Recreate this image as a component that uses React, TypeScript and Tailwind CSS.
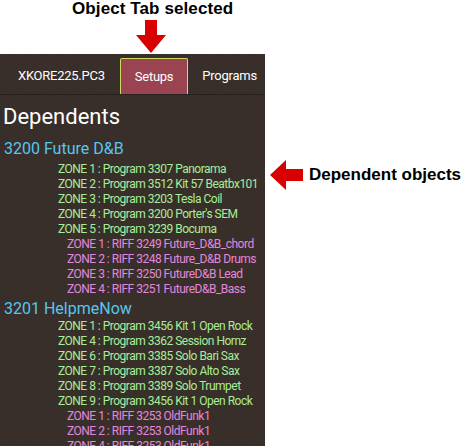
import React from "react";

type Line = { text: string; kind: "zone" | "riff" };

const groups: { title: string; lines: Line[] }[] = [
  {
    title: "3200 Future D&B",
    lines: [
      { text: "ZONE 1 : Program 3307 Panorama", kind: "zone" },
      { text: "ZONE 2 : Program 3512 Kit 57 Beatbx101", kind: "zone" },
      { text: "ZONE 3 : Program 3203 Tesla Coil", kind: "zone" },
      { text: "ZONE 4 : Program 3200 Porter's SEM", kind: "zone" },
      { text: "ZONE 5 : Program 3239 Bocuma", kind: "zone" },
      { text: "ZONE 1 : RIFF 3249 Future_D&B_chord", kind: "riff" },
      { text: "ZONE 2 : RIFF 3248 Future_D&B Drums", kind: "riff" },
      { text: "ZONE 3 : RIFF 3250 FutureD&B Lead", kind: "riff" },
      { text: "ZONE 4 : RIFF 3251 FutureD&B_Bass", kind: "riff" },
    ],
  },
  {
    title: "3201 HelpmeNow",
    lines: [
      { text: "ZONE 1 : Program 3456 Kit 1 Open Rock", kind: "zone" },
      { text: "ZONE 4 : Program 3362 Session Hornz", kind: "zone" },
      { text: "ZONE 6 : Program 3385 Solo Bari Sax", kind: "zone" },
      { text: "ZONE 7 : Program 3387 Solo Alto Sax", kind: "zone" },
      { text: "ZONE 8 : Program 3389 Solo Trumpet", kind: "zone" },
      { text: "ZONE 9 : Program 3456 Kit 1 Open Rock", kind: "zone" },
      { text: "ZONE 1 : RIFF 3253 OldFunk1", kind: "riff" },
      { text: "ZONE 2 : RIFF 3253 OldFunk1", kind: "riff" },
      { text: "ZONE 4 : RIFF 3253 OldFunk1", kind: "riff" },
    ],
  },
];

export default function App() {
  return (
    <div className="w-[462px] h-[446px] bg-white overflow-hidden font-['Roboto',sans-serif]">
      <div className="h-[54px] flex flex-col">
        <div className="ml-[72px] text-[17px] leading-[17px] font-bold text-black font-['Liberation_Sans',Arial,sans-serif] tracking-[0.1px]">
          Object Tab selected
        </div>
        <svg className="ml-[136px] mt-[3px]" width="30" height="33" viewBox="0 0 30 33">
          <polygon points="9,0 21,0 21,15 30,15 15,33 0,15 9,15" fill="#d80000" />
        </svg>
      </div>
      <div className="flex">
        <div className="w-[265px] h-[392px] bg-[#3a302b] bg-[repeating-linear-gradient(45deg,rgba(0,0,0,0.07)_0px,rgba(0,0,0,0.07)_1px,transparent_1px,transparent_3px)] overflow-hidden">
          <div className="h-[41px] flex items-end pl-[4px] border-b border-[#262120]">
            <div className="px-[14px] h-[36px] flex items-center text-[13px] tracking-[-0.25px] text-white">XKORE225.PC3</div>
            <div className="ml-[1px] px-[14px] h-[36px] flex items-center text-[13px] tracking-[-0.25px] text-white bg-[#9b4451] border border-b-0 border-[#c8dc64] rounded-t-[2px]">
              Setups
            </div>
            <div className="px-[14px] h-[36px] flex items-center text-[13px] tracking-[-0.25px] text-white whitespace-nowrap">Programs</div>
          </div>
          <div className="pl-[3px] pt-[9px]">
            <div className="text-[22px] leading-[25px] text-white">Dependents</div>
            {groups.map((g, gi) => (
              <div key={gi} className={gi === 0 ? "mt-[10px]" : "mt-[2px]"}>
                <div className="text-[16px] leading-[20px] text-[#55c6f0] pl-[1px]">{g.title}</div>
                <div className={gi === 0 ? "mt-[3px]" : ""}>
                  {g.lines.map((l, li) => (
                    <div
                      key={li}
                      className={
                        l.kind === "zone"
                          ? "pl-[55px] text-[12px] leading-[15px] text-[#a6ee98] whitespace-nowrap tracking-[-0.5px]"
                          : "pl-[64px] text-[12px] leading-[15px] text-[#e487dc] whitespace-nowrap tracking-[-0.5px]"
                      }
                    >
                      {l.text}
                    </div>
                  ))}
                </div>
              </div>
            ))}
          </div>
        </div>
        <div className="pt-[106px] pl-[5px]">
          <div className="flex items-center gap-[6px]">
            <svg width="33" height="30" viewBox="0 0 33 30">
              <polygon points="0,15 16,0 16,9 33,9 33,21 16,21 16,30" fill="#d80000" />
            </svg>
            <div className="text-[17px] leading-[20px] font-bold text-black font-['Liberation_Sans',Arial,sans-serif] whitespace-nowrap">
              Dependent objects
            </div>
          </div>
        </div>
      </div>
    </div>
  );
}
